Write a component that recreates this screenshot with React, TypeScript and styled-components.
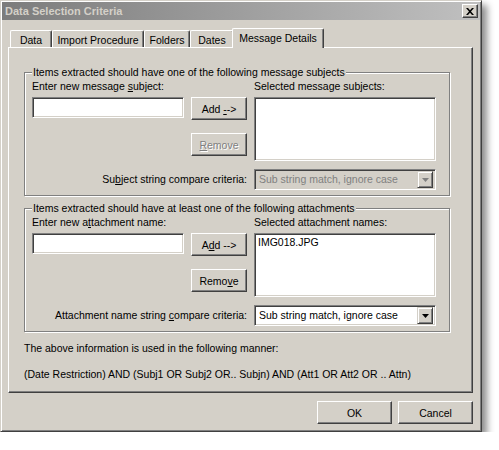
import React from "react";
import styled, { createGlobalStyle } from "styled-components";

const GlobalStyle = createGlobalStyle`
  body {
    margin: 0;
    background: #fff;
    font-family: "Liberation Sans", Arial, sans-serif;
    font-size: 10.5px;
    color: #000;
  }
`;

const Window = styled.div`
  box-sizing: border-box;
  width: 482px;
  height: 432px;
  padding: 1px;
  display: flex;
  flex-direction: column;
  background: #d4d0c8;
  border: 1px solid;
  border-color: #d4d0c8 #404040 #404040 #d4d0c8;
  box-shadow: inset 1px 1px 0 #fff, inset -1px -1px 0 #808080,
    5px 5px 7px rgba(0, 0, 0, 0.45);
`;

const TitleBar = styled.div`
  height: 18px;
  display: flex;
  align-items: center;
  justify-content: space-between;
  padding: 0 2px 0 3px;
  background: linear-gradient(to right, #7c7c7c, #c0c0c0);
`;

const Title = styled.span`
  font-size: 11px;
  font-weight: bold;
  color: #d4d0c8;
  line-height: 13px;
`;

const CloseButton = styled.div`
  box-sizing: border-box;
  width: 16px;
  height: 14px;
  display: flex;
  align-items: center;
  justify-content: center;
  background: #d4d0c8;
  border: 1px solid;
  border-color: #fff #404040 #404040 #fff;
  box-shadow: inset -1px -1px 0 #808080;
`;

const TabStrip = styled.div`
  display: flex;
  align-items: flex-end;
  height: 19px;
  margin: 8px 7px 0 6px;
  padding-left: 2px;
`;

const Tab = styled.div<{ $w: number; $active?: boolean }>`
  box-sizing: border-box;
  width: ${(p) => p.$w}px;
  height: ${(p) => (p.$active ? 20 : 17)}px;
  padding-top: 3px;
  line-height: 13px;
  text-align: center;
  white-space: nowrap;
  background: #d4d0c8;
  border-top: 1px solid #fff;
  border-left: 1px solid #fff;
  border-right: 1px solid #404040;
  border-radius: 2px 2px 0 0;
  box-shadow: inset -1px 0 0 #808080;
  position: relative;
  z-index: ${(p) => (p.$active ? 2 : 1)};
  margin: ${(p) => (p.$active ? "0 -2px -1px -2px" : "0")};
`;

const Panel = styled.div`
  box-sizing: border-box;
  height: 346px;
  margin: 0 7px 0 6px;
  padding: 18px 0 0 15px;
  display: flex;
  flex-direction: column;
  border: 1px solid;
  border-color: #fff #404040 #404040 #fff;
  box-shadow: inset -1px -1px 0 #808080;
`;

const GroupBox = styled.fieldset`
  box-sizing: border-box;
  width: 426px;
  min-width: 0;
  margin: 0;
  padding: 1px 12px 5px 7px;
  border: 1px solid #808080;
  box-shadow: inset 1px 1px 0 #fff, 1px 1px 0 #fff;

  & + & {
    margin-top: 6px;
  }
`;

const Legend = styled.legend`
  padding: 0 1px;
  line-height: 13px;
  background: #d4d0c8;
`;

const Grid = styled.div`
  display: grid;
  grid-template-columns: 152px 56px 182px;
  grid-template-rows: 13px auto;
  column-gap: 7px;
  row-gap: 4px;
`;

const Label = styled.div<{ $right?: boolean }>`
  line-height: 13px;
  white-space: nowrap;
  text-align: ${(p) => (p.$right ? "right" : "left")};
`;

const TextBox = styled.div`
  box-sizing: border-box;
  height: 21px;
  background: #fff;
  border: 1px solid;
  border-color: #808080 #fff #fff #808080;
  box-shadow: inset 1px 1px 0 #404040, inset -1px -1px 0 #d4d0c8;
`;

const ListBox = styled(TextBox)`
  height: 64px;
  padding: 2px 3px;
  line-height: 13px;
`;

const ButtonStack = styled.div`
  display: flex;
  flex-direction: column;
  gap: 13px;
`;

const Button = styled.div<{ $disabled?: boolean; $w?: number }>`
  box-sizing: border-box;
  width: ${(p) => p.$w ?? 56}px;
  height: 23px;
  display: flex;
  align-items: center;
  justify-content: center;
  white-space: pre;
  background: #d4d0c8;
  border: 1px solid;
  border-color: #fff #404040 #404040 #fff;
  box-shadow: inset -1px -1px 0 #808080;
  color: ${(p) => (p.$disabled ? "#808080" : "#000")};
  text-shadow: ${(p) => (p.$disabled ? "1px 1px 0 #fff" : "none")};
`;

const CriteriaRow = styled.div`
  display: grid;
  grid-template-columns: 215px 182px;
  column-gap: 7px;
  align-items: center;
  margin-top: 8px;
`;

const Combo = styled(TextBox)<{ $disabled?: boolean }>`
  display: flex;
  align-items: center;
  justify-content: space-between;
  padding: 2px 2px 2px 4px;
  background: ${(p) => (p.$disabled ? "#d4d0c8" : "#fff")};
  color: ${(p) => (p.$disabled ? "#808080" : "#000")};
  line-height: 13px;
`;

const ComboArrow = styled.div<{ $disabled?: boolean }>`
  box-sizing: border-box;
  width: 16px;
  height: 17px;
  display: flex;
  align-items: center;
  justify-content: center;
  background: #d4d0c8;
  border: 1px solid;
  border-color: #d4d0c8 #404040 #404040 #d4d0c8;
  box-shadow: inset 1px 1px 0 #fff, inset -1px -1px 0 #808080;
  color: ${(p) => (p.$disabled ? "#808080" : "#000")};
`;

const Info = styled.div`
  margin-top: 10px;
  display: flex;
  flex-direction: column;
  gap: 13px;
  line-height: 13px;
`;

const Footer = styled.div`
  display: flex;
  justify-content: flex-end;
  gap: 6px;
  margin: 8px 7px 0 0;
`;

const Arrow = ({ disabled }: { disabled?: boolean }) => (
  <ComboArrow $disabled={disabled}>
    <svg width="7" height="4" viewBox="0 0 7 4">
      <path d="M0 0h7L3.5 4z" fill="currentColor" />
    </svg>
  </ComboArrow>
);

type GroupProps = {
  legend: string;
  leftLabel: React.ReactNode;
  rightLabel: string;
  addLabel: React.ReactNode;
  removeLabel: React.ReactNode;
  removeDisabled?: boolean;
  items: string[];
  criteriaLabel: React.ReactNode;
  criteriaDisabled?: boolean;
};

const Group = ({
  legend,
  leftLabel,
  rightLabel,
  addLabel,
  removeLabel,
  removeDisabled,
  items,
  criteriaLabel,
  criteriaDisabled,
}: GroupProps) => (
  <GroupBox>
    <Legend>{legend}</Legend>
    <Grid>
      <Label>{leftLabel}</Label>
      <div />
      <Label>{rightLabel}</Label>
      <div>
        <TextBox />
      </div>
      <ButtonStack>
        <Button>
          <span>{addLabel}</span>
        </Button>
        <Button $disabled={removeDisabled}>
          <span>{removeLabel}</span>
        </Button>
      </ButtonStack>
      <ListBox>
        {items.map((item) => (
          <div key={item}>{item}</div>
        ))}
      </ListBox>
    </Grid>
    <CriteriaRow>
      <Label $right>{criteriaLabel}</Label>
      <Combo $disabled={criteriaDisabled}>
        <span>Sub string match, ignore case</span>
        <Arrow disabled={criteriaDisabled} />
      </Combo>
    </CriteriaRow>
  </GroupBox>
);

const tabs = [
  { name: "Data", w: 42 },
  { name: "Import Procedure", w: 92 },
  { name: "Folders", w: 46 },
  { name: "Dates", w: 44 },
  { name: "Message Details", w: 92, active: true },
];

export default function App() {
  return (
    <>
      <GlobalStyle />
      <Window>
        <TitleBar>
          <Title>Data Selection Criteria</Title>
          <CloseButton>
            <svg width="8" height="7" viewBox="0 0 8 7">
              <path d="M0 0h2l2 2.3L6 0h2L5 3.5 8 7H6L4 4.7 2 7H0l3-3.5z" fill="#000" />
            </svg>
          </CloseButton>
        </TitleBar>
        <TabStrip>
          {tabs.map((t) => (
            <Tab key={t.name} $w={t.w} $active={t.active}>
              {t.name}
            </Tab>
          ))}
        </TabStrip>
        <Panel>
          <Group
            legend="Items extracted should have one of the following message subjects"
            leftLabel={
              <>
                Enter new message <u>s</u>ubject:
              </>
            }
            rightLabel="Selected message subjects:"
            addLabel={
              <>
                {"Add "}
                <u>-</u>-&gt;
              </>
            }
            removeLabel={
              <>
                <u>R</u>emove
              </>
            }
            removeDisabled
            items={[]}
            criteriaLabel={
              <>
                Su<u>b</u>ject string compare criteria:
              </>
            }
            criteriaDisabled
          />
          <Group
            legend="Items extracted should have at least one of the following attachments"
            leftLabel={
              <>
                Enter new a<u>t</u>tachment name:
              </>
            }
            rightLabel="Selected attachment names:"
            addLabel={
              <>
                A<u>d</u>d --&gt;
              </>
            }
            removeLabel={
              <>
                Remo<u>v</u>e
              </>
            }
            items={["IMG018.JPG"]}
            criteriaLabel={
              <>
                Attachment name string <u>c</u>ompare criteria:
              </>
            }
          />
          <Info>
            <div>The above information is used in the following manner:</div>
            <div>
              (Date Restriction) AND (Subj1 OR Subj2 OR.. Subjn) AND (Att1 OR Att2 OR .. Attn)
            </div>
          </Info>
        </Panel>
        <Footer>
          <Button $w={75}>OK</Button>
          <Button $w={75}>Cancel</Button>
        </Footer>
      </Window>
    </>
  );
}
